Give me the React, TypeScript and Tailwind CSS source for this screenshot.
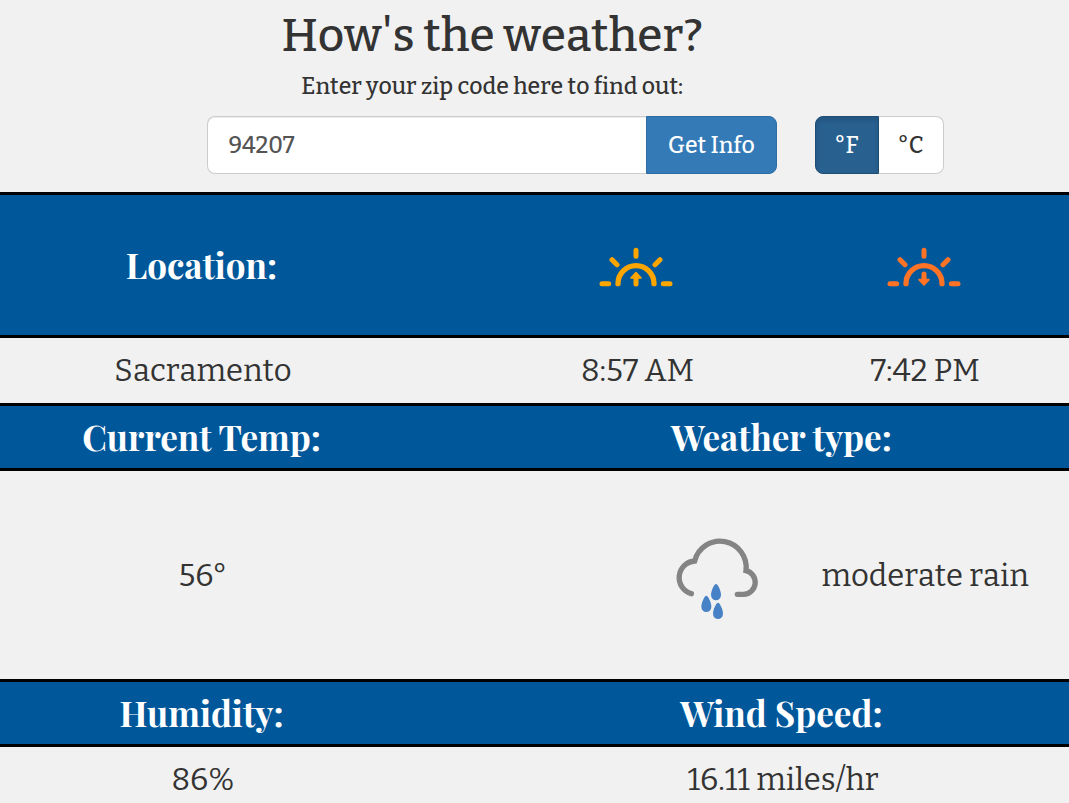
import { useState } from "react";
import type { ReactNode } from "react";

function Horizon({ color, label, children }: { color: string; label: string; children: ReactNode }) {
  return (
    <svg
      role="img"
      aria-label={label}
      viewBox="0 0 330 210"
      className={`mx-auto block h-[70px] w-[110px] ${color}`}
      fill="none"
      stroke="currentColor"
      strokeWidth="15"
      strokeLinecap="round"
    >
      <path d="M111 161a54 54 0 0 1 108 0" strokeWidth="16" />
      <path d="M63 161h20M247 161h20M165 61v18M93 89l15 15M237 89l-15 15" />
      {children}
    </svg>
  );
}

function Drop({ x, y }: { x: number; y: number }) {
  return (
    <path
      transform={`translate(${x} ${y})`}
      d="M0 0C-5 0-15 20-15 33a15 16 0 0 0 30 0C15 20 5 0 0 0Z"
      fill="#4882c6"
    />
  );
}

function RainCloud() {
  return (
    <svg role="img" aria-label="Rain" viewBox="-6 0 360 330" className="ml-auto block h-[110px] w-[120px]">
      <path
        d="M94 221A50 50 0 0 1 104 123A78.500 78.500 0 0 1 258 152A36 36 0 0 1 251 223H232"
        fill="none"
        stroke="#848484"
        strokeWidth="16"
        strokeLinecap="round"
      />
      <Drop x={168} y={192} />
      <Drop x={139} y={227} />
      <Drop x={174} y={248} />
    </svg>
  );
}

const headRow = "bg-[#00589b] text-white";
const headCell =
  "border-y-[3px] border-black p-0 text-center text-[35px] leading-[62px] font-bold [font-kerning:auto] font-['Playfair_Display','Liberation_Serif',serif]";
const dataCell = "p-0 pl-[3px] text-center text-[31px] leading-[65px] font-normal";

export default function App() {
  const [zip, setZip] = useState("94207");
  const [unit, setUnit] = useState("F");

  return (
    <main className="min-h-screen overflow-x-hidden bg-[#f1f1f1] font-['Bitter','DejaVu_Serif',serif] text-[#333333] [font-kerning:none]">
      <header className="flex items-end pb-[18px] pl-[19.4%]">
        <form className="w-[66.1%] text-center" onSubmit={(e) => e.preventDefault()}>
          <h1 className="pt-2 text-[46px] leading-[56px] font-medium whitespace-nowrap">How's the weather?</h1>
          <label htmlFor="zip" className="block pt-1 pb-3 text-[23px] leading-[36px] font-medium whitespace-nowrap">
            Enter your zip code here to find out:
          </label>
          <div className="flex h-[58px]">
            <input
              id="zip"
              value={zip}
              onChange={(e) => setZip(e.target.value)}
              className="min-w-0 flex-1 rounded-l-lg border border-r-0 border-[#cccccc] bg-white px-5 text-[23px] font-medium text-[#555555] shadow-[inset_0_1px_1px_rgba(0,0,0,0.075)]"
            />
            <button
              type="submit"
              className="w-[131px] rounded-r-lg border border-[#2e6da4] bg-[#337ab7] text-[23px] font-medium whitespace-nowrap text-white"
            >
              Get Info
            </button>
          </div>
        </form>
        <div role="group" aria-label="Temperature unit" className="ml-[38px] flex h-[58px] shrink-0">
          {["F", "C"].map((u) => (
            <button
              key={u}
              type="button"
              aria-pressed={unit === u}
              onClick={() => setUnit(u)}
              className={`border text-[23px] font-medium first:w-16 first:rounded-l-lg last:w-[65px] last:rounded-r-lg ${
                unit === u
                  ? "border-[#204d74] bg-[#286090] text-white shadow-[inset_0_3px_5px_rgba(0,0,0,0.125)]"
                  : "border-[#cccccc] bg-white first:border-r-0 last:border-l-0"
              }`}
            >
              °{u}
            </button>
          ))}
        </div>
      </header>

      <table className="w-full table-fixed border-separate border-spacing-0">
        <colgroup>
          <col className="w-[37.7%]" />
          <col className="w-[8.5%]" />
          <col className="w-[26.6%]" />
          <col className="w-[27.2%]" />
        </colgroup>
        <tbody>
          <tr className={`h-[146px] ${headRow}`}>
            <th className={headCell}>Location:</th>
            <th className={headCell} />
            <th className={headCell}>
              <Horizon color="text-[#ffa500]" label="Sunrise">
                <path d="M165 140v22" />
                <path d="M165 128l-15 16h30z" fill="currentColor" strokeWidth="5" strokeLinejoin="round" />
              </Horizon>
            </th>
            <th className={headCell}>
              <Horizon color="text-[#ff7326]" label="Sunset">
                <path d="M165 132v20" />
                <path d="M165 165l-15-16h30z" fill="currentColor" strokeWidth="5" strokeLinejoin="round" />
              </Horizon>
            </th>
          </tr>
          <tr>
            <td className={dataCell}>Sacramento</td>
            <td className={dataCell} />
            <td className={dataCell}>8:57 AM</td>
            <td className={dataCell}>7:42 PM</td>
          </tr>
          <tr className={headRow}>
            <th className={headCell}>Current Temp:</th>
            <th className={headCell} />
            <th className={headCell} colSpan={2}>
              Weather type:
            </th>
          </tr>
          <tr className="h-[208px]">
            <td className={dataCell}>{unit === "F" ? "56°" : "13°"}</td>
            <td className={dataCell} />
            <td className={dataCell}>
              <RainCloud />
            </td>
            <td className={`${dataCell} whitespace-nowrap`}>moderate rain</td>
          </tr>
          <tr className={headRow}>
            <th className={headCell}>Humidity:</th>
            <th className={headCell} />
            <th className={headCell} colSpan={2}>
              Wind Speed:
            </th>
          </tr>
          <tr>
            <td className={dataCell}>86%</td>
            <td className={dataCell} />
            <td className={dataCell} colSpan={2}>
              16.11 miles/hr
            </td>
          </tr>
        </tbody>
      </table>
    </main>
  );
}
